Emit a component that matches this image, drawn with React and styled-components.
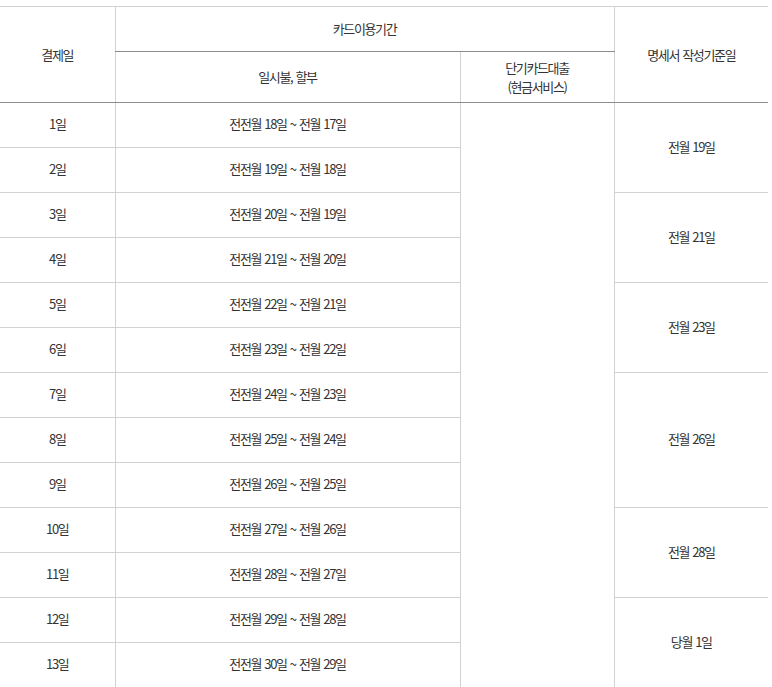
import styled, { createGlobalStyle } from 'styled-components';

const GlobalStyle = createGlobalStyle`
  html, body {
    margin: 0;
    padding: 0;
    background: #fff;
    overflow: hidden;
  }
  body {
    font-family: "Noto Sans CJK KR", "Noto Sans", sans-serif;
  }
`;

const rows = [
  { day: 1, from: 18, to: 17 },
  { day: 2, from: 19, to: 18 },
  { day: 3, from: 20, to: 19 },
  { day: 4, from: 21, to: 20 },
  { day: 5, from: 22, to: 21 },
  { day: 6, from: 23, to: 22 },
  { day: 7, from: 24, to: 23 },
  { day: 8, from: 25, to: 24 },
  { day: 9, from: 26, to: 25 },
  { day: 10, from: 27, to: 26 },
  { day: 11, from: 28, to: 27 },
  { day: 12, from: 29, to: 28 },
  { day: 13, from: 30, to: 29 },
];

// 명세서 작성기준일 : 시작 행 -> [rowspan, 텍스트]
const baseDays = {
  1: [2, '전월 19일'],
  3: [2, '전월 21일'],
  5: [2, '전월 23일'],
  7: [3, '전월 26일'],
  10: [2, '전월 28일'],
  12: [2, '당월 1일'],
};

const Wrap = styled.div`
  padding-top: 6px;
  width: 768px;
`;

const Table = styled.table`
  width: 768px;
  border-collapse: collapse;
  table-layout: fixed;
  border-top: 1px solid #d2d2d2;
  color: #333;
  font-size: 13px;
  letter-spacing: -1.35px;
  word-spacing: 1.6px;
`;

const Row = styled.tr`
  height: ${(p) => p.$h || 45}px;
`;

const Th = styled.th`
  font-weight: normal;
  padding: 0 0 1px;
  line-height: 19px;
  text-align: center;
  vertical-align: middle;
  border-left: ${(p) => (p.$first ? 'none' : '1px solid #d2d2d2')};
  border-bottom: 1px solid #8c8c8c;
`;

const Td = styled.td`
  padding: 0 0 3px;
  text-align: center;
  vertical-align: middle;
  border-left: ${(p) => (p.$first ? 'none' : '1px solid #d2d2d2')};
  border-bottom: 1px solid #d2d2d2;
`;

const App = () => {
  return (
    <>
      <GlobalStyle />
      <Wrap>
        <Table>
          <colgroup>
            <col style={{ width: 115 }} />
            <col style={{ width: 345 }} />
            <col style={{ width: 154 }} />
            <col style={{ width: 154 }} />
          </colgroup>
          <thead>
            <Row $h={45}>
              <Th $first rowSpan={2}>결제일</Th>
              <Th colSpan={2}>카드이용기간</Th>
              <Th rowSpan={2}>명세서 작성기준일</Th>
            </Row>
            <Row $h={51}>
              <Th>일시불, 할부</Th>
              <Th>
                단기카드대출
                <br />
                (현금서비스)
              </Th>
            </Row>
          </thead>
          <tbody>
            {rows.map((r, i) => (
              <Row key={r.day}>
                <Td $first>{r.day}일</Td>
                <Td>
                  전전월 {r.from}일 ~ 전월 {r.to}일
                </Td>
                {i === 0 && <Td rowSpan={rows.length} />}
                {baseDays[r.day] && (
                  <Td rowSpan={baseDays[r.day][0]}>{baseDays[r.day][1]}</Td>
                )}
              </Row>
            ))}
          </tbody>
        </Table>
      </Wrap>
    </>
  );
};

export default App;
